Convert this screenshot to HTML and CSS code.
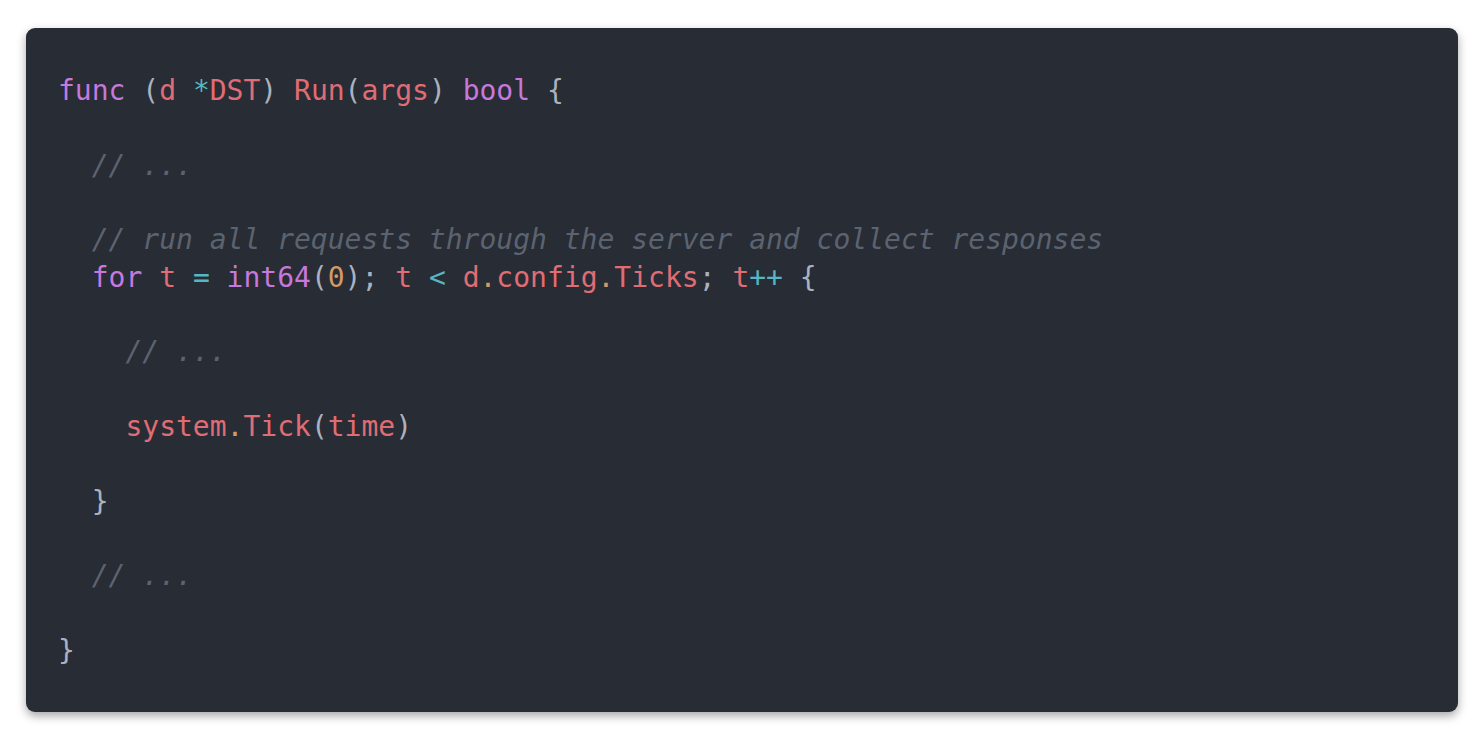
FILE: index.html
```html
<!DOCTYPE html>
<html>
<head>
<meta charset="utf-8">
<link rel="stylesheet" href="styles.css">
</head>
<body>
<div class="page">
<pre class="code"><code><span class="k">func</span> <span class="p">(</span><span class="v">d</span> <span class="o">*</span><span class="v">DST</span><span class="p">)</span> <span class="v">Run</span><span class="p">(</span><span class="v">args</span><span class="p">)</span> <span class="k">bool</span> <span class="p">{</span>

  <span class="c">// ...</span>

  <span class="c">// run all requests through the server and collect responses</span>
  <span class="k">for</span> <span class="v">t</span> <span class="o">=</span> <span class="k">int64</span><span class="p">(</span><span class="n">0</span><span class="p">);</span> <span class="v">t</span> <span class="o">&lt;</span> <span class="v">d</span><span class="n">.</span><span class="v">config</span><span class="n">.</span><span class="v">Ticks</span><span class="p">;</span> <span class="v">t</span><span class="o">++</span> <span class="p">{</span>

    <span class="c">// ...</span>

    <span class="v">system</span><span class="n">.</span><span class="v">Tick</span><span class="p">(</span><span class="v">time</span><span class="p">)</span>

  <span class="p">}</span>

  <span class="c">// ...</span>

<span class="p">}</span></code></pre>
</div>
</body>
</html>
```

FILE: styles.css
```css
html, body {
  margin: 0;
  background: #ffffff;
}
.page {
  padding: 28px 26px;
}
.code {
  margin: 0;
  background: #282c34;
  border-radius: 9px;
  box-shadow: 0 4px 10px rgba(0, 0, 0, 0.35);
  padding: 44px 32px 43px;
  font-family: "DejaVu Sans Mono", monospace;
  font-size: 28px;
  line-height: 37.33px;
  color: #abb2bf;
  white-space: pre;
}
.k { color: #c678dd; }
.v { color: #e06c75; }
.o { color: #56b6c2; }
.n { color: #d19a66; }
.p { color: #abb2bf; }
.c { color: #5c6370; font-style: italic; }
```
